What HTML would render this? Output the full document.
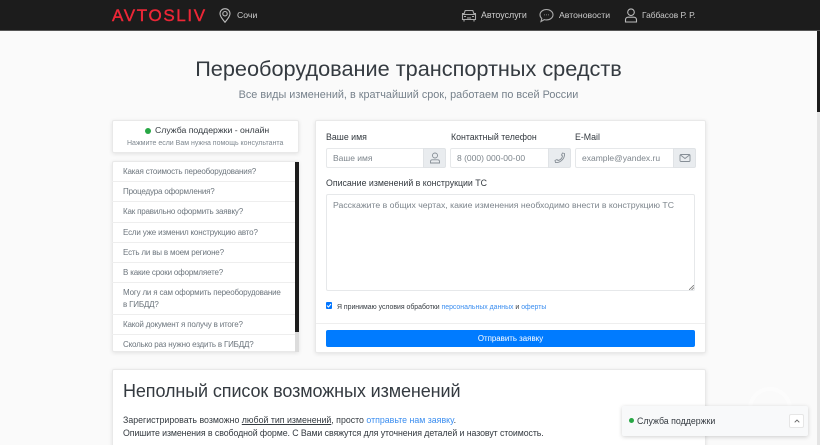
<!DOCTYPE html>
<html lang="ru"><head><meta charset="utf-8"><title>Переоборудование</title>
<style>
html,body{margin:0;padding:0;width:820px;height:445px;overflow:hidden}
#w{position:relative;width:820px;height:445px;overflow:hidden;background:#fafafa;font-family:"Liberation Sans",sans-serif;color:#343a40}
.a{position:absolute;white-space:nowrap}
.card{position:absolute;background:#fff;border:1px solid #e9e9e9;box-sizing:border-box;box-shadow:0 1px 4px rgba(0,0,0,.1);border-radius:2px}
.nav{font-size:8.700px;line-height:11px;color:#ccc}
.q{position:absolute;left:123px;font-size:8px;letter-spacing:-.18px;color:#6c757d;white-space:nowrap;line-height:13px}
.ln{position:absolute;left:112px;width:183px;height:1px;background:#eee}
.lab{font-size:8.800px;color:#343a40;position:absolute;white-space:nowrap}
.inp{position:absolute;top:148px;height:20px;box-sizing:border-box;border:1px solid #e6e8ea;border-radius:2px 0 0 2px;background:#fff;font-size:8.500px;color:#7d858c;line-height:18px;padding-left:6px;white-space:nowrap}
.ad{position:absolute;top:148px;height:20px;width:23px;box-sizing:border-box;background:#e9ecef;border:1px solid #e0e3e6;border-radius:0 2px 2px 0}
.ad svg{position:absolute;left:5px;top:3px}
a{color:#3b8ef0;text-decoration:none}
</style></head><body><div id="w">
<div class="a" style="left:0;top:0;width:820px;height:30px;background:#1c1c1c;border-bottom:1px solid #555"></div>
<div class="a" style="left:112px;top:6px;font-size:17px;line-height:19px;letter-spacing:1.65px;color:#ee2737;-webkit-text-stroke:.4px #ee2737">AVTOSLIV</div>
<svg class="a" style="left:218px;top:8px" width="14" height="15" viewBox="0 0 14 15" fill="none" stroke="#bbb" stroke-width="1.1"><path d="M7 14.300C4.500 11 2 8.500 2 5.700a5 5 0 0 1 10 0C12 8.500 9.500 11 7 14.300z"/><circle cx="7" cy="5.700" r="2.200"/></svg>
<div class="a nav" style="left:237px;top:10px">Сочи</div>

<svg class="a" style="left:461px;top:9px" width="16" height="13" viewBox="0 0 16 13" fill="none" stroke="#aaa" stroke-width="1.1"><path d="M3 5l1.200-3.500h7.600L13 5M1.500 5.500h13v5h-13zM3 10.500v2M13 10.500v2M1 4.500h2M13 4.500h2"/><path d="M3 7.500h2M11 7.500h2M6 9h4"/></svg>
<div class="a nav" style="left:481px;top:10px;font-size:8.900px">Автоуслуги</div>
<svg class="a" style="left:539px;top:8px" width="15" height="15" viewBox="0 0 15 15" fill="none" stroke="#aaa" stroke-width="1.1"><path d="M7.500 1.500c3.600 0 6.500 2.300 6.500 5.200s-2.900 5.200-6.500 5.200c-.8 0-1.500-.1-2.200-.3L2 13.500l.8-3C1.700 9.500 1 8.200 1 6.700 1 3.800 3.900 1.500 7.500 1.500z"/><path d="M5 6.800h.6M7.200 6.800h.6M9.400 6.800h.6"/></svg>
<div class="a nav" style="left:559px;top:10px">Автоновости</div>
<svg class="a" style="left:624px;top:8px" width="14" height="15" viewBox="0 0 14 15" fill="none" stroke="#bbb" stroke-width="1.1"><circle cx="7" cy="4.200" r="3.300"/><path d="M1.500 14v-2.200c0-1.500 1.200-2.600 2.700-2.600h5.600c1.500 0 2.700 1.100 2.700 2.600V14z"/></svg>
<div class="a nav" style="left:642px;top:10px;font-size:8.400px">Габбасов Р. Р.</div>

<div class="a" style="left:817px;top:31px;width:3px;height:414px;background:#e4e4e4"></div>
<div class="a" style="left:817px;top:31px;width:3px;height:81px;background:#1c1c1c"></div>

<div class="a" style="left:0;top:56px;width:817px;text-align:center;font-size:21.700px;line-height:26px;color:#343a40">Переоборудование транспортных средств</div>
<div class="a" style="left:0;top:88px;width:817px;text-align:center;font-size:10.850px;line-height:15px;color:#76818b">Все виды изменений, в кратчайший срок, работаем по всей России</div>

<div class="card" style="left:112px;top:120px;width:187px;height:33px"></div>
<div class="a" style="left:145px;top:128px;width:6px;height:6px;border-radius:50%;background:#28a745"></div>
<div class="a" style="left:155px;top:124px;font-size:8.700px;line-height:12px;color:#343a40">Служба поддержки - онлайн</div>
<div class="a" style="left:127px;top:138px;font-size:7px;line-height:11px;color:#7f8890">Нажмите если Вам нужна помощь консультанта</div>

<div class="card" style="left:112px;top:161px;width:187px;height:191px"></div>
<div class="a" style="left:295px;top:162px;width:4px;height:170px;background:#1c1c1c"></div>
<div class="a" style="left:295px;top:332px;width:4px;height:20px;background:#dcdcdc"></div>
<div class="q" style="top:165px">Какая стоимость переоборудования?</div><div class="ln" style="top:181px"></div>
<div class="q" style="top:185px">Процедура оформления?</div><div class="ln" style="top:201px"></div>
<div class="q" style="top:205px">Как правильно оформить заявку?</div><div class="ln" style="top:222px"></div>
<div class="q" style="top:226px">Если уже изменил конструкцию авто?</div><div class="ln" style="top:242px"></div>
<div class="q" style="top:246px">Есть ли вы в моем регионе?</div><div class="ln" style="top:262px"></div>
<div class="q" style="top:266px">В какие сроки оформляете?</div><div class="ln" style="top:282px"></div>
<div class="q" style="top:286px">Могу ли я сам оформить переоборудование</div>
<div class="q" style="top:298px">в ГИБДД?</div><div class="ln" style="top:314px"></div>
<div class="q" style="top:318px">Какой документ я получу в итоге?</div><div class="ln" style="top:334px"></div>
<div class="q" style="top:338px">Сколько раз нужно ездить в ГИБДД?</div>

<div class="card" style="left:315px;top:120px;width:391px;height:233px"></div>
<div class="lab" style="left:326px;top:132px">Ваше имя</div>
<div class="lab" style="left:451px;top:132px">Контактный телефон</div>
<div class="lab" style="left:575px;top:132px">E-Mail</div>
<div class="inp" style="left:326px;width:98px">Ваше имя</div>
<div class="ad" style="left:423px"><svg width="12" height="12" viewBox="0 0 12 12" fill="none" stroke="#868e96" stroke-width=".9"><circle cx="6" cy="3.500" r="2.500"/><path d="M1.500 11V9.500c0-1 .8-1.700 1.800-1.700h5.400c1 0 1.800.7 1.800 1.700V11z"/></svg></div>
<div class="inp" style="left:450px;width:99px">8 (000) 000-00-00</div>
<div class="ad" style="left:548px"><svg width="12" height="12" viewBox="0 0 12 12" fill="none" stroke="#868e96" stroke-width=".9"><path d="M10.500 1.500L8.500 1 7.500 3l1 1C8 6.500 6.500 8 4 8.500l-1-1-2 1 .5 2c5 .5 9.500-4 9-9z"/></svg></div>
<div class="inp" style="left:575px;width:99px">example@yandex.ru</div>
<div class="ad" style="left:673px"><svg width="12" height="12" viewBox="0 0 12 12" fill="none" stroke="#868e96" stroke-width=".9"><rect x="1" y="2.500" width="10" height="7" rx="1"/><path d="M1.500 3l4.500 3.500L10.500 3"/></svg></div>
<div class="lab" style="left:326px;top:178px">Описание изменений в конструкции ТС</div>
<div class="a" style="left:326px;top:194px;width:369px;height:97px;box-sizing:border-box;border:1px solid #e6e8ea;border-radius:2px;background:#fff;font-size:8.700px;line-height:14px;color:#7d858c;padding:3px 6px">Расскажите в общих чертах, какие изменения необходимо внести в конструкцию ТС</div>
<svg class="a" style="left:689px;top:285px" width="5" height="5" viewBox="0 0 5 5" stroke="#777" stroke-width=".8"><path d="M0 5L5 0M2.500 5L5 2.500"/></svg>
<div class="a" style="left:326px;top:302px;width:6px;height:7px;background:#0075ff;border-radius:1px"></div>
<svg class="a" style="left:326px;top:302px" width="6" height="7" viewBox="0 0 6 7" fill="none" stroke="#fff" stroke-width="1"><path d="M1 3.500l1.500 1.500L5 2"/></svg>
<div class="a" style="left:337px;top:302px;font-size:6.900px;line-height:11px;color:#343a40">Я принимаю условия обработки <a>персональных данных</a> и <a>оферты</a></div>
<div class="a" style="left:316px;top:323px;width:389px;height:1px;background:#eee"></div>
<div class="a" style="left:326px;top:330px;width:369px;height:17px;background:#007bff;border-radius:2px;color:#fff;font-size:7.900px;line-height:17px;text-align:center">Отправить заявку</div>

<div class="card" style="left:112px;top:369px;width:594px;height:90px"></div>
<div class="a" style="left:123px;top:380px;font-size:18px;line-height:22px;color:#343a40;letter-spacing:-.1px">Неполный список возможных изменений</div>
<div class="a" style="left:123px;top:414px;font-size:8.800px;line-height:13px;color:#343a40">Зарегистрировать возможно <span style="text-decoration:underline">любой тип изменений</span>, просто <a>отправьте нам заявку</a>.</div>
<div class="a" style="left:123px;top:427px;font-size:8.800px;letter-spacing:-.08px;line-height:13px;color:#343a40">Опишите изменения в свободной форме. С Вами свяжутся для уточнения деталей и назовут стоимость.</div>

<svg class="a" style="left:745px;top:382px" width="50" height="50" viewBox="0 0 50 50" fill="none" stroke="#fcfcfc" stroke-width="4"><circle cx="25" cy="27" r="20"/></svg>
<div class="a" style="left:622px;top:406px;width:186px;height:30px;background:#f8f9fa;box-shadow:0 1px 4px rgba(0,0,0,.18);border-radius:2px"></div>
<div class="a" style="left:629px;top:418px;width:5px;height:5px;border-radius:50%;background:#28a745"></div>
<div class="a" style="left:637px;top:415px;font-size:8.800px;line-height:12px;color:#343a40">Служба поддержки</div>
<div class="a" style="left:789px;top:414px;width:15px;height:14px;box-sizing:border-box;background:#fff;border:1px solid #e6e6e6;border-radius:2px"></div>
<svg class="a" style="left:794px;top:419px" width="6" height="4" viewBox="0 0 6 4" fill="none" stroke="#666" stroke-width=".9"><path d="M.7 3.300L3 1l2.300 2.300"/></svg>
</div></body></html>
